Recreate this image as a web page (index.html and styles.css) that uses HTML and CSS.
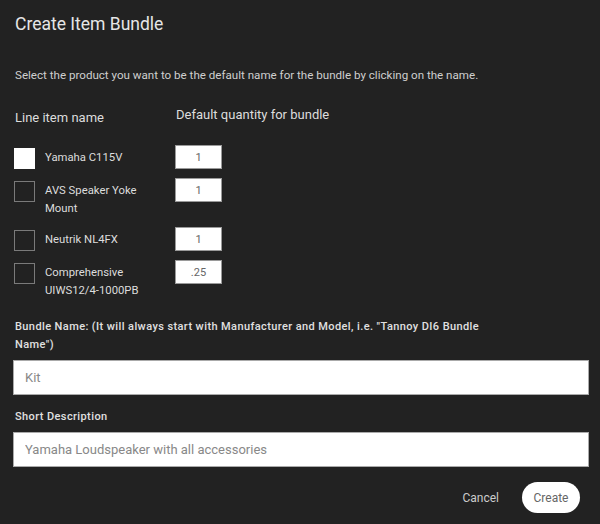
FILE: index.html
```html
<html>
	<head>
		<title>Create Item Bundle</title>
		<link rel="stylesheet" href="styles.css">
	</head>
	<body>
		<div class="modal">
			<h1>Create Item Bundle</h1>
			<p class="intro">Select the product you want to be the default name for the bundle by clicking on the name.</p>

			<div class="cols">
				<div class="col-name">Line item name</div>
				<div class="col-qty">Default quantity for bundle</div>
			</div>

			<div class="item">
				<span class="check checked"></span>
				<span class="item-name">Yamaha C115V</span>
				<input class="qty" type="text" value="1">
			</div>
			<div class="item">
				<span class="check"></span>
				<span class="item-name">AVS Speaker Yoke Mount</span>
				<input class="qty" type="text" value="1">
			</div>
			<div class="item">
				<span class="check"></span>
				<span class="item-name">Neutrik NL4FX</span>
				<input class="qty" type="text" value="1">
			</div>
			<div class="item">
				<span class="check"></span>
				<span class="item-name">Comprehensive UIWS12/4-1000PB</span>
				<input class="qty" type="text" value=".25">
			</div>

			<label class="field-label">Bundle Name: (It will always start with Manufacturer and Model, i.e. "Tannoy DI6 Bundle Name")</label>
			<input class="field" type="text" placeholder="Kit">

			<label class="field-label short">Short Description</label>
			<input class="field" type="text" placeholder="Yamaha Loudspeaker with all accessories">

			<div class="actions">
				<a href="#" class="cancel">Cancel</a>
				<button class="create">Create</button>
			</div>
		</div>
	</body>
</html>
```

FILE: styles.css
```css
html, body {
	margin: 0;
	background-color: #222;
}

body {
	font-family: Roboto, "Liberation Sans", sans-serif;
	color: #ddd;
}

.modal {
	width: 576px;
	padding: 12px 11px 0px 13px;
}

h1 {
	margin: 0px 0px 0px 2px;
	font-size: 17.5px;
	line-height: 24px;
	font-weight: 400;
	color: #e6e6e6;
}

.intro {
	margin: 31px 0px 0px 2px;
	font-size: 11.6px;
	line-height: 16px;
	color: #cfcfcf;
}

.cols {
	display: flex;
	margin-top: 23px;
	font-size: 13px;
	line-height: 18px;
	color: #ddd;
}

.col-name {
	width: 161px;
	padding: 3px 0px 0px 2px;
}

.col-qty {
	padding-top: 0px;
}

.item {
	display: flex;
	align-items: flex-start;
	margin-bottom: 9px;
}

.cols + .item {
	margin-top: 18px;
}

.check {
	box-sizing: border-box;
	width: 21px;
	height: 21px;
	margin: 3px 0px 0px 1px;
	border: 1.5px solid #7a7a7a;
}

.check.checked {
	background-color: #fff;
	border-color: #fff;
}

.item-name {
	width: 122px;
	margin-left: 10px;
	padding-top: 4px;
	font-size: 11.3px;
	line-height: 18px;
	color: #ddd;
}

.qty {
	box-sizing: border-box;
	width: 47px;
	height: 24px;
	margin: 0px 0px 0px 8px;
	border: 1px solid #9a9a9a;
	background-color: #fff;
	text-align: center;
	font-family: Roboto, "Liberation Sans", sans-serif;
	font-size: 11px;
	color: #666;
	padding: 0px;
}

.field-label {
	display: block;
	max-width: 480px;
	margin: 18px 0px 6px 2px;
	font-size: 11px;
	line-height: 18px;
	font-weight: 500;
	letter-spacing: 0.4px;
	color: #e0e0e0;
}

.field-label.short {
	margin-top: 13px;
	margin-bottom: 6px;
}

.field {
	display: block;
	box-sizing: border-box;
	width: 576px;
	height: 35px;
	margin: 0px;
	padding: 0px 11px;
	border: 1px solid #aaa;
	background-color: #fff;
	font-family: Roboto, "Liberation Sans", sans-serif;
	font-size: 13px;
}

.field::placeholder {
	color: #888;
}

.actions {
	display: flex;
	justify-content: flex-end;
	align-items: center;
	margin-top: 15px;
	padding-right: 9px;
}

.cancel {
	font-size: 12px;
	color: #ccc;
	text-decoration: none;
	margin-right: 23px;
}

.create {
	width: 58px;
	height: 31px;
	border: none;
	border-radius: 16px;
	background-color: #fff;
	font-family: Roboto, "Liberation Sans", sans-serif;
	font-size: 12px;
	color: #666;
	padding: 0px;
}
```
